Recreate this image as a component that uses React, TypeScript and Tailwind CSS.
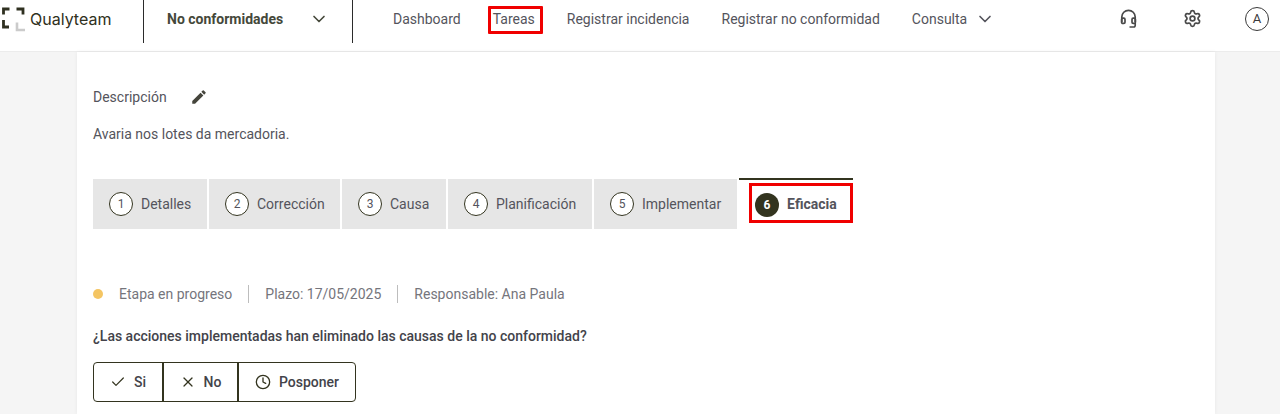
import { Check, ChevronDown, Clock, Settings, X } from 'lucide-react'

const NAV = ['Dashboard', 'Tareas', 'Registrar incidencia', 'Registrar no conformidad']

const STEPS = [
  { n: 1, label: 'Detalles', w: 'w-[114px]' },
  { n: 2, label: 'Corrección', w: 'w-[131px]' },
  { n: 3, label: 'Causa', w: 'w-[104px]' },
  { n: 4, label: 'Planificación', w: 'w-[144px]' },
  { n: 5, label: 'Implementar', w: 'w-[143px]' },
]

function Logo() {
  return (
    <svg width="25" height="32" viewBox="0 0 25 32" fill="none" className="shrink-0">
      <path d="M9.5 9H3.5V14.5M16.5 9H23V14.5M3.5 20V27H9" stroke="#2f3020" strokeWidth="2.8" />
      <path d="M17 22.5V30H25" stroke="#cbcbcb" strokeWidth="2.6" />
    </svg>
  )
}

function Headset() {
  return (
    <svg width="17" height="20" viewBox="0 0 17 20" fill="none" stroke="#4a4a4a" strokeWidth="1.7" className="shrink-0">
      <path d="M1.8 13V8a6.7 6.7 0 0 1 13.4 0v5" />
      <rect x="1.6" y="9.2" width="3.4" height="5.2" rx="1.2" />
      <rect x="12" y="9.2" width="3.4" height="5.2" rx="1.2" />
      <path d="M15.2 14v2.6a1.4 1.4 0 0 1-1.4 1.4H9.5" />
    </svg>
  )
}

function Pencil() {
  return (
    <svg width="18" height="18" viewBox="0 0 24 24" fill="#45453c">
      <path d="M3 17.25V21h3.75L17.81 9.94l-3.75-3.75L3 17.25zM20.71 7.04a1 1 0 0 0 0-1.41l-2.34-2.34a1 1 0 0 0-1.41 0l-1.83 1.83 3.75 3.75 1.83-1.83z" />
    </svg>
  )
}

export default function App() {
  return (
    <div className="h-[414px] overflow-hidden bg-[#f5f5f5] font-['Roboto',sans-serif] text-[#54545c]">
      {/* Top bar */}
      <header className="flex h-[52px] items-start border-b border-[#ececec] bg-white">
        <div className="flex h-[43px] w-[143px] items-start">
          <Logo />
          <span className="ml-[5px] mt-[8px] font-['Inter',sans-serif] text-[16px] leading-[22px] text-[#2f3020]">Qualyteam</span>
        </div>
        <div className="flex h-[43px] w-[210px] items-center justify-between border-x border-[#2b2b2b] pb-[5px] pl-[23px] pr-[23px]">
          <span className="text-[14px] font-bold text-[#45483a]">No conformidades</span>
          <ChevronDown size={20} strokeWidth={2} className="text-[#45483a]" />
        </div>
        <nav className="ml-[40px] flex items-center pt-[9px] text-[14px] leading-[20px] text-[#54545c]">
          {NAV.map(item => (
            <span key={item} className={item === 'Tareas' ? 'relative mr-[32px]' : 'mr-[32px]'}>
              {item}
              {item === 'Tareas' && <span className="absolute -left-[5px] -right-[8px] -top-[3px] h-[28px] rounded-[1px] border-[3px] border-[#f00000]" />}
            </span>
          ))}
          <span>Consulta</span>
          <ChevronDown size={20} strokeWidth={2} className="ml-[8px]" />
        </nav>
        <div className="ml-auto flex items-start pr-[11px] pt-[7px]">
          <span className="mt-[2px]"><Headset /></span>
          <Settings size={19} strokeWidth={2.2} className="ml-[46px] mt-[2px] text-[#4a4a4a]" />
          <span className="ml-[43px] flex h-[24px] w-[24px] items-center justify-center rounded-full border border-[#3a3a3a] text-[13px] text-[#3a3a3a]">A</span>
        </div>
      </header>

      {/* Card */}
      <main className="ml-[77px] mr-[65px] h-[362px] bg-white pl-[16px] shadow-[0_0_4px_rgba(0,0,0,0.06)]">
        <div className="flex items-center pt-[35px] text-[14px] leading-[20px]">
          <span>Descripción</span>
          <span className="ml-[23px]"><Pencil /></span>
        </div>
        <p className="mt-[17px] text-[14px] leading-[20px]">Avaria nos lotes da mercadoria.</p>

        {/* Steps */}
        <div className="mt-[35px] flex h-[50px] gap-[2px]">
          {STEPS.map(step => (
            <div key={step.n} className={`${step.w} flex items-center gap-[8px] bg-[#e6e6e6] pl-[16px]`}>
              <span className="flex h-[24px] w-[24px] items-center justify-center rounded-full border border-[#33341f] bg-white text-[12px]">{step.n}</span>
              <span className="text-[14px]">{step.label}</span>
            </div>
          ))}
          <div className="relative -mt-[1px] flex h-[51px] w-[114px] items-center gap-[8px] border-t-2 border-[#33341f] pl-[16px]">
            <span className="flex h-[24px] w-[24px] items-center justify-center rounded-full bg-[#33341f] text-[12px] font-bold text-white">6</span>
            <span className="text-[14px] font-bold">Eficacia</span>
            <span className="absolute left-[10px] top-[3px] h-[40px] w-[104px] border-[3px] border-[#f00000]" />
          </div>
        </div>

        {/* Status */}
        <div className="mt-[56px] flex h-[18px] items-center text-[14px] text-[#75757c]">
          <span className="h-[10px] w-[10px] rounded-full bg-[#f4c563]" />
          <span className="ml-[16px]">Etapa en progreso</span>
          <span className="mx-[16px] h-[18px] w-px bg-[#bdbdbd]" />
          <span>Plazo: 17/05/2025</span>
          <span className="mx-[16px] h-[18px] w-px bg-[#bdbdbd]" />
          <span>Responsable: Ana Paula</span>
        </div>

        <p className="mt-[23px] text-[14px] font-medium leading-[20px] text-[#43434a]">¿Las acciones implementadas han eliminado las causas de la no conformidad?</p>

        <div className="mt-[16px] flex h-[40px] w-[263px] rounded-[4px] border border-[#33341f] text-[14px] font-medium text-[#43434a]">
          <button className="flex w-[69px] items-center justify-center gap-[8px] border-r border-[#33341f]">
            <Check size={16} strokeWidth={1.8} className="text-[#33341f]" />Si
          </button>
          <button className="flex w-[75px] items-center justify-center gap-[8px] border-x border-[#33341f]">
            <X size={16} strokeWidth={1.8} className="text-[#33341f]" />No
          </button>
          <button className="flex flex-1 items-center justify-center gap-[8px] border-l border-[#33341f]">
            <Clock size={16} strokeWidth={2} className="text-[#33341f]" />Posponer
          </button>
        </div>
      </main>
    </div>
  )
}
